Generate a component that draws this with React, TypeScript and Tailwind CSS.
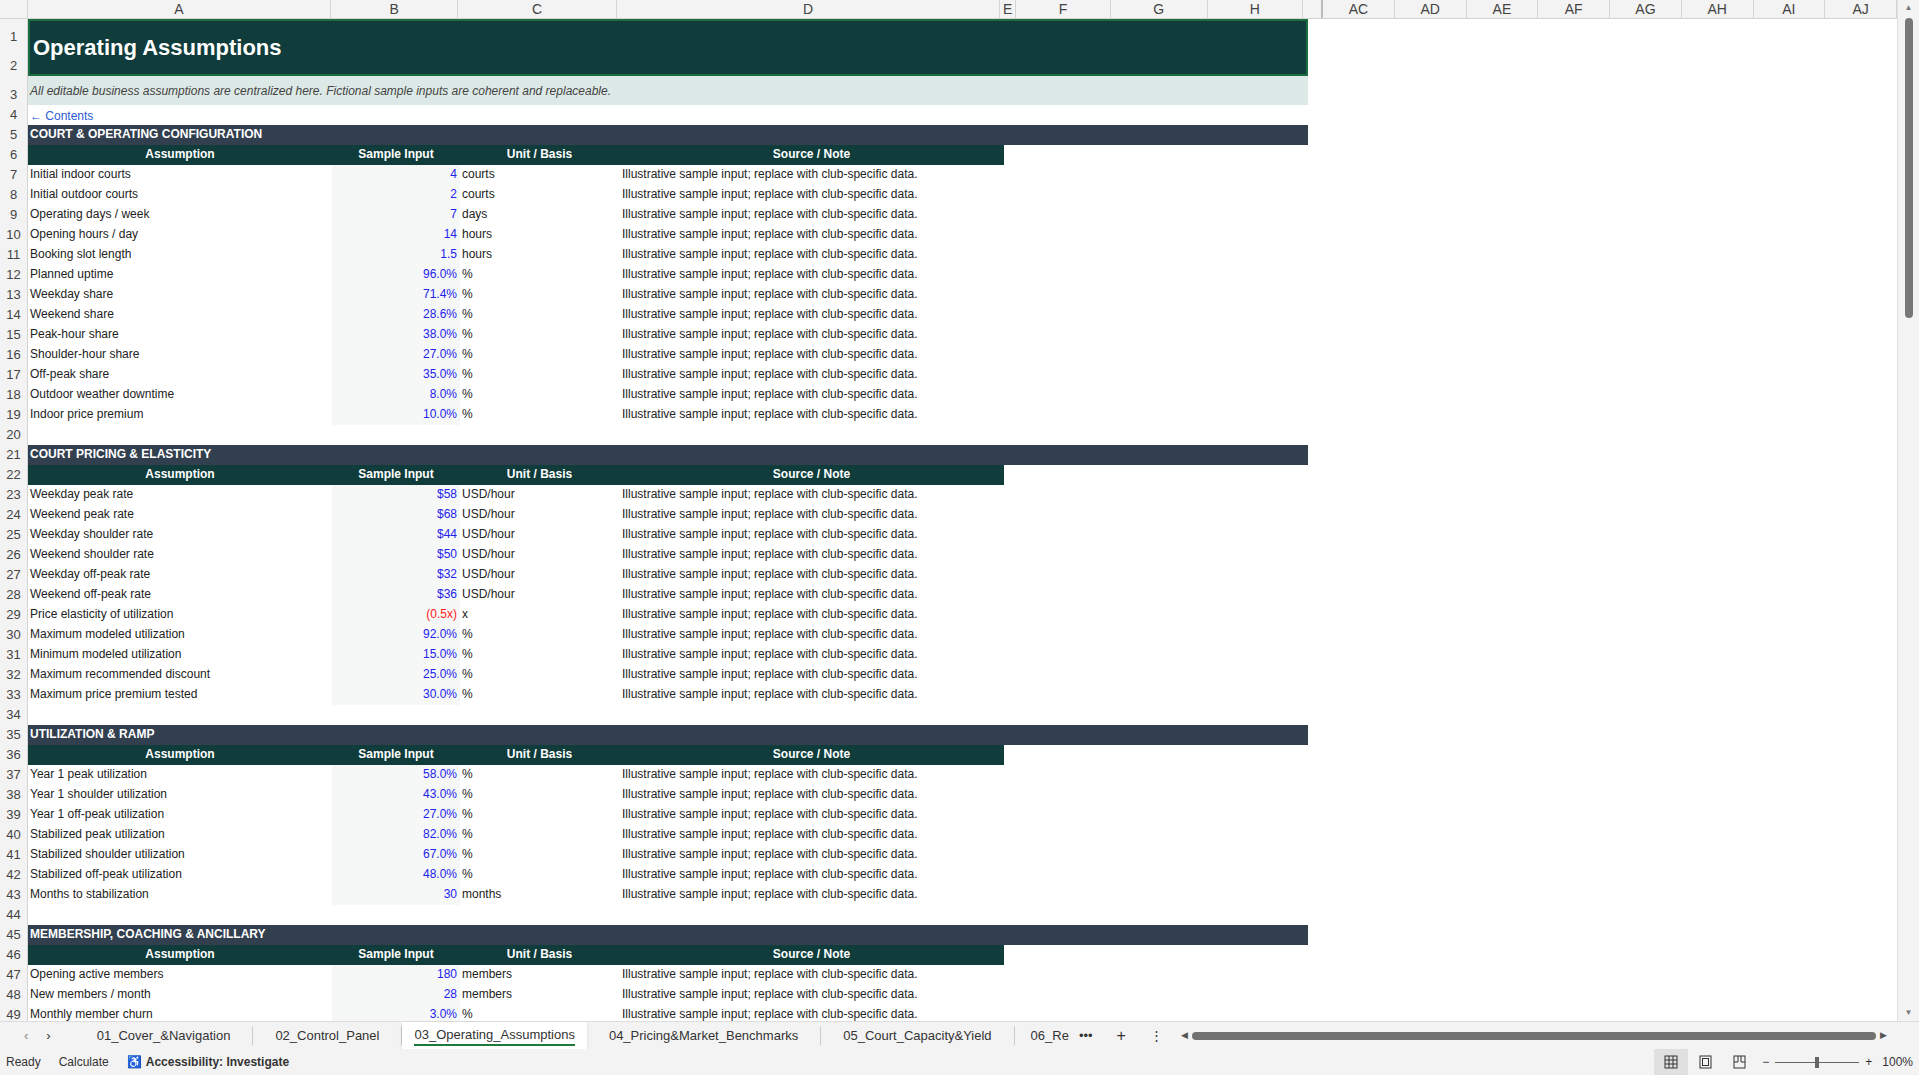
import React from "react";

const NOTE = "Illustrative sample input; replace with club-specific data.";

type Row =
  | { t: "band"; label: string }
  | { t: "head" }
  | { t: "blank" }
  | { t: "data"; a: string; v: string; u: string; red?: boolean };

const d = (a: string, v: string, u: string, red?: boolean): Row => ({ t: "data", a, v, u, red });

const rows: Row[] = [
  { t: "band", label: "COURT & OPERATING CONFIGURATION" },
  { t: "head" },
  d("Initial indoor courts", "4", "courts"),
  d("Initial outdoor courts", "2", "courts"),
  d("Operating days / week", "7", "days"),
  d("Opening hours / day", "14", "hours"),
  d("Booking slot length", "1.5", "hours"),
  d("Planned uptime", "96.0%", "%"),
  d("Weekday share", "71.4%", "%"),
  d("Weekend share", "28.6%", "%"),
  d("Peak-hour share", "38.0%", "%"),
  d("Shoulder-hour share", "27.0%", "%"),
  d("Off-peak share", "35.0%", "%"),
  d("Outdoor weather downtime", "8.0%", "%"),
  d("Indoor price premium", "10.0%", "%"),
  { t: "blank" },
  { t: "band", label: "COURT PRICING & ELASTICITY" },
  { t: "head" },
  d("Weekday peak rate", "$58", "USD/hour"),
  d("Weekend peak rate", "$68", "USD/hour"),
  d("Weekday shoulder rate", "$44", "USD/hour"),
  d("Weekend shoulder rate", "$50", "USD/hour"),
  d("Weekday off-peak rate", "$32", "USD/hour"),
  d("Weekend off-peak rate", "$36", "USD/hour"),
  d("Price elasticity of utilization", "(0.5x)", "x", true),
  d("Maximum modeled utilization", "92.0%", "%"),
  d("Minimum modeled utilization", "15.0%", "%"),
  d("Maximum recommended discount", "25.0%", "%"),
  d("Maximum price premium tested", "30.0%", "%"),
  { t: "blank" },
  { t: "band", label: "UTILIZATION & RAMP" },
  { t: "head" },
  d("Year 1 peak utilization", "58.0%", "%"),
  d("Year 1 shoulder utilization", "43.0%", "%"),
  d("Year 1 off-peak utilization", "27.0%", "%"),
  d("Stabilized peak utilization", "82.0%", "%"),
  d("Stabilized shoulder utilization", "67.0%", "%"),
  d("Stabilized off-peak utilization", "48.0%", "%"),
  d("Months to stabilization", "30", "months"),
  { t: "blank" },
  { t: "band", label: "MEMBERSHIP, COACHING & ANCILLARY" },
  { t: "head" },
  d("Opening active members", "180", "members"),
  d("New members / month", "28", "members"),
  d("Monthly member churn", "3.0%", "%"),
];

const cols = [
  ["A", "w-[304px]"], ["B", "w-[128px]"], ["C", "w-[159px]"], ["D", "w-[385px]"],
  ["E", "w-[16px]"], ["F", "w-[95px]"], ["G", "w-[97px]"], ["H", "w-[96px]"],
];
const far = ["AC", "AD", "AE", "AF", "AG", "AH", "AI", "AJ"];

function RowNum({ n, h }: { n: React.ReactNode; h: string }) {
  return (
    <div className={`w-[28px] ${h} shrink-0 flex items-end justify-center pb-[1px] text-[13px] text-[#444] bg-[#f3f3f3] border-r border-[#d4d4d4]`}>
      {n}
    </div>
  );
}

export default function App() {
  return (
    <div className="w-[1919px] h-[1075px] flex flex-col bg-white overflow-hidden" style={{ fontFamily: '"Liberation Sans", Arial, sans-serif' }}>
      <div className="flex flex-1 min-h-0">
        <div className="flex-1 flex flex-col min-w-0">
          {/* column headers */}
          <div className="flex h-[19px] bg-[#f3f3f3] border-b border-[#d4d4d4] text-[14px] text-[#444] shrink-0">
            <div className="w-[28px] border-r border-[#d4d4d4]" />
            {cols.map(([c, w]) => (
              <div key={c} className={`${w} text-center border-r border-[#d4d4d4] leading-[18px]`}>{c}</div>
            ))}
            <div className="w-[20px] border-r-2 border-[#bbb]" />
            {far.map((c) => (
              <div key={c} className="w-[72px] text-center border-r border-[#d4d4d4] leading-[18px]">{c}</div>
            ))}
          </div>
          {/* title rows 1-2 */}
          <div className="flex h-[57px] shrink-0">
            <div className="w-[28px] flex flex-col bg-[#f3f3f3] border-r border-[#d4d4d4] text-[13px] text-[#444]">
              <div className="flex-1 flex items-end justify-center pb-[1px]">1</div>
              <div className="flex-1 flex items-end justify-center pb-[1px]">2</div>
            </div>
            <div className="w-[1280px] bg-[#103c3c] border-2 border-[#1d6b40] flex items-center px-[3px] text-white text-[22px] font-bold">
              Operating Assumptions
            </div>
          </div>
          <div className="flex h-[29px] shrink-0">
            <RowNum n="3" h="h-[29px]" />
            <div className="w-[1280px] bg-[#dde9e6] flex items-center px-[2px] italic text-[12px] text-[#444]">
              All editable business assumptions are centralized here. Fictional sample inputs are coherent and replaceable.
            </div>
          </div>
          <div className="flex h-[20px] shrink-0">
            <RowNum n="4" h="h-[20px]" />
            <div className="flex items-end px-[2px] text-[12px] text-[#2b5cd6]">← Contents</div>
          </div>
          {rows.map((r, i) => {
            const n = i + 5;
            return (
              <div key={n} className="flex h-[20px] shrink-0 text-[12px]">
                <RowNum n={n} h="h-[20px]" />
                {r.t === "band" && (
                  <div className="w-[1280px] bg-[#323f4f] text-white font-bold flex items-end pb-[2px] px-[2px]">{r.label}</div>
                )}
                {r.t === "head" && (
                  <div className="flex bg-[#103c3c] text-white font-bold items-end pb-[2px]">
                    <div className="w-[304px] text-center">Assumption</div>
                    <div className="w-[128px] text-center">Sample Input</div>
                    <div className="w-[159px] text-center">Unit / Basis</div>
                    <div className="w-[385px] text-center">Source / Note</div>
                  </div>
                )}
                {r.t === "data" && (
                  <div className="flex items-end text-[#222]">
                    <div className="w-[304px] px-[2px] pb-[2px]">{r.a}</div>
                    <div className={`w-[128px] h-[20px] bg-[#f6f8f8] text-right px-[3px] pb-[2px] flex items-end justify-end ${r.red ? "text-[#ff2020]" : "text-[#2222ee]"}`}>{r.v}</div>
                    <div className="w-[159px] px-[2px] pb-[2px]">{r.u}</div>
                    <div className="w-[385px] px-[3px] pb-[2px]">{NOTE}</div>
                  </div>
                )}
              </div>
            );
          })}
          <div className="flex-1 flex">
            <div className="w-[28px] bg-[#f3f3f3] border-r border-[#d4d4d4]" />
          </div>
        </div>
        {/* vertical scrollbar */}
        <div className="w-[22px] bg-[#f3f3f3] border-l border-[#e0e0e0] flex flex-col items-center py-[2px]">
          <div className="text-[8px] text-[#777]">▲</div>
          <div className="w-[8px] h-[300px] mt-[4px] rounded bg-[#777]" />
          <div className="flex-1" />
          <div className="text-[8px] text-[#777]">▼</div>
        </div>
      </div>
      {/* sheet tabs */}
      <div className="h-[28px] flex items-center bg-[#f3f3f3] border-t border-[#ddd] text-[13px] text-[#333] shrink-0">
        <div className="flex gap-[18px] px-[24px] text-[#888]"><span>‹</span><span className="text-[#333]">›</span></div>
        <div className="flex items-center h-full">
          <div className="px-[22px] border-r border-[#ccc]">01_Cover_&amp;Navigation</div>
          <div className="px-[22px] border-r border-[#ccc]">02_Control_Panel</div>
          <div className="px-[12px] h-full bg-white flex flex-col justify-center shadow">
            <span className="border-b-2 border-[#1d7a3a] leading-[18px]">03_Operating_Assumptions</span>
          </div>
          <div className="px-[22px] border-r border-[#ccc]">04_Pricing&amp;Market_Benchmarks</div>
          <div className="px-[22px] border-r border-[#ccc]">05_Court_Capacity&amp;Yield</div>
          <div className="pl-[16px]">06_Re</div>
          <div className="px-[10px]">•••</div>
          <div className="px-[14px] text-[16px]">+</div>
          <div className="px-[10px]">⋮</div>
        </div>
        <div className="flex-1 flex items-center px-[8px] gap-[4px]">
          <span className="text-[9px] text-[#555]">◀</span>
          <div className="flex-1 h-[8px] rounded bg-[#727272]" />
          <span className="text-[9px] text-[#555]">▶</span>
        </div>
        <div className="w-[24px]" />
      </div>
      {/* status bar */}
      <div className="h-[26px] flex items-center bg-[#f3f3f3] text-[12px] text-[#333] px-[6px] gap-[18px] shrink-0">
        <span>Ready</span>
        <span>Calculate</span>
        <span className="font-bold flex items-center gap-1"><span>♿</span>Accessibility: Investigate</span>
        <div className="flex-1" />
        <div className="flex items-center h-full">
          <div className="w-[34px] h-full bg-[#e0e0e0] flex items-center justify-center">
            <svg width="14" height="14" viewBox="0 0 14 14" fill="none" stroke="#333"><rect x="1" y="1" width="12" height="12" /><path d="M5 1v12M9 1v12M1 5h12M1 9h12" /></svg>
          </div>
          <div className="w-[34px] flex justify-center">
            <svg width="13" height="14" viewBox="0 0 13 14" fill="none" stroke="#333"><rect x="1" y="1" width="11" height="12" /><rect x="3.5" y="3.5" width="6" height="7" /></svg>
          </div>
          <div className="w-[34px] flex justify-center">
            <svg width="13" height="14" viewBox="0 0 13 14" fill="none" stroke="#333"><rect x="1" y="1" width="11" height="12" /><path d="M1 7h4V1M8 1v6h4" /></svg>
          </div>
          <span className="px-[6px]">−</span>
          <div className="w-[84px] h-[1px] bg-[#666] relative"><div className="absolute left-[40px] -top-[5px] w-[4px] h-[11px] bg-[#666]" /></div>
          <span className="px-[6px]">+</span>
          <span className="pl-[4px]">100%</span>
        </div>
      </div>
    </div>
  );
}
